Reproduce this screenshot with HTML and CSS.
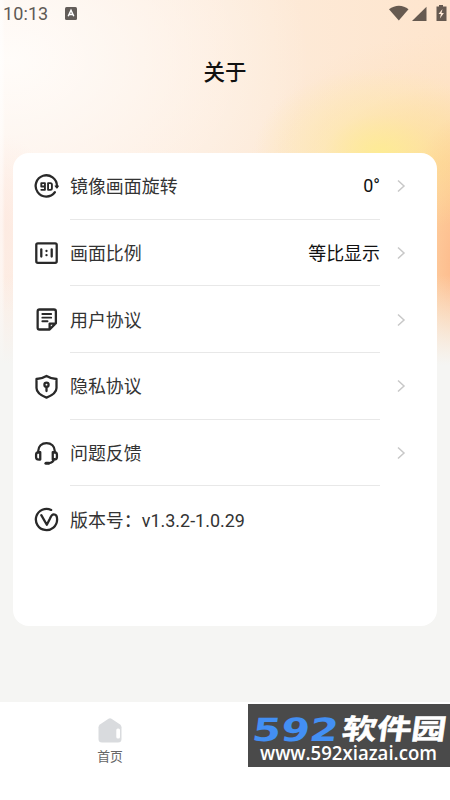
FILE: index.html
```html
<!DOCTYPE html>
<html lang="zh-CN">
<head>
<meta charset="utf-8">
<title>关于</title>
<link rel="stylesheet" href="styles.css">
</head>
<body>
<div class="screen">
  <header class="status">
    <span class="time">10:13</span>
    <svg class="badge" viewBox="0 0 12 13"><rect width="12" height="13" rx="1.5" fill="#625c58"/><path d="M3.2 9.2 6 3.3l2.8 5.9M4.2 7.5h3.6" fill="none" stroke="#fff" stroke-width="1.5"/></svg>
    <svg class="signals" viewBox="0 0 60 20"><g fill="#665a50"><path d="M0 4.300C6-.6 14-.6 19.500 4.300L9.800 15.500z"/><path d="M37.500 1.800V16H23z"/><path d="M50 1.500V0h4v1.500H57.500V16H47.500V1.500z"/></g><path d="M53.500 4l-4 5h2.400l-1 4.500 4-5.500h-2.400z" fill="#ffe9d5"/></svg>
  </header>
  <h1>关于</h1>
  <main class="card">
    <div class="row">
      <svg class="icon" viewBox="0 0 24 24"><path d="M20 17.500A10.200 10.200 0 1 1 22 11.500v1"/><path d="M20.300 11.500h3.200L22 13.500z" stroke-width="1"/><path class="fine" d="M10.500 12H7V8.800h3.500v6.400H7M13.500 8.800h2.200q1.500 0 1.500 1.500v3.400q0 1.500-1.500 1.500h-2.200z"/></svg>
      <div class="line"><span>镜像画面旋转</span><span class="value">0°</span></div>
      <svg class="chevron" viewBox="0 0 10 14"><path d="M2 1.500 8 7l-6 5.500"/></svg>
    </div>
    <div class="row">
      <svg class="icon" viewBox="0 0 24 24"><rect x="2.200" y="2.200" width="19.600" height="18.800" rx="1.500"/><path d="M7 8v7M17 8v7M12 9.500v.1M12 13.500v.1"/></svg>
      <div class="line"><span>画面比例</span><span class="value">等比显示</span></div>
      <svg class="chevron" viewBox="0 0 10 14"><path d="M2 1.500 8 7l-6 5.500"/></svg>
    </div>
    <div class="row">
      <svg class="icon" viewBox="0 0 24 24"><path d="M21 15.500V4.200q0-1.800-1.800-1.800H5.300q-1.800 0-1.800 1.800v15.600q0 1.800 1.800 1.800H15zM15 21v-5h5.500"/><path class="fine" d="M8 6.700h8.500M8 10.200h8.500M8 13.700h5"/></svg>
      <div class="line"><span>用户协议</span></div>
      <svg class="chevron" viewBox="0 0 10 14"><path d="M2 1.500 8 7l-6 5.500"/></svg>
    </div>
    <div class="row">
      <svg class="icon" viewBox="0 0 24 24"><path d="M12 1.900Q16.500 4.700 21.600 4.800V13.500Q21.600 19 12 22.700Q2.400 19 2.400 13.500V4.800Q7.500 4.700 12 1.900z"/><circle cx="12" cy="10.300" r="2"/><path d="M12 12.300v4"/></svg>
      <div class="line"><span>隐私协议</span></div>
      <svg class="chevron" viewBox="0 0 10 14"><path d="M2 1.500 8 7l-6 5.500"/></svg>
    </div>
    <div class="row">
      <svg class="icon" viewBox="0 0 24 24"><path d="M4 11V9.800C4 5 7.500 2 12 2s8 3 8 7.800V11M6 10.800v7H5Q2 17.800 2 15.500v-2.500q0-2.200 3-2.200zM18 10.800v7h1Q22 17.800 22 15.500v-2.500q0-2.200-3-2.200zM19.300 17.500Q18.500 20.700 14 21.200"/><path d="M11.500 21.400h2.500" stroke-width="3"/></svg>
      <div class="line"><span>问题反馈</span></div>
      <svg class="chevron" viewBox="0 0 10 14"><path d="M2 1.500 8 7l-6 5.500"/></svg>
    </div>
    <div class="row">
      <svg class="icon" viewBox="0 0 24 24"><path d="M16.500 2.800A10.200 10.200 0 1 0 22.200 12C22.200 8.500 21 7 19 7C17 7 16.400 8.400 15.400 11L12.300 17L7 7.800"/></svg>
      <div class="line last"><span>版本号：v1.3.2-1.0.29</span></div>
    </div>
  </main>
  <nav class="tabs">
    <div class="tab">
      <svg class="home" viewBox="0 0 24 25"><path d="M10.500.8q1.500-1 3 0l8.600 5.800q1.400 1 1.400 2.600V21q0 3.500-3.500 3.500H4Q.5 24.500.5 21V9.200q0-1.600 1.400-2.600z" fill="#d9dbde"/><rect x="18.300" y="10.500" width="3.700" height="10" rx="1.600" fill="#fff"/></svg>
      <span>首页</span>
    </div>
    <svg class="watermark" viewBox="0 0 202 63">
      <rect width="202" height="63" fill="#4a4a4a"/>
      <text class="digits" transform="translate(3 36.500) skewX(-8)" textLength="86" lengthAdjust="spacingAndGlyphs">592</text>
      <text class="brand" transform="translate(93 34.500) skewX(-8)" textLength="104" lengthAdjust="spacingAndGlyphs">软件园</text>
      <text class="site" x="12" y="56" textLength="177" lengthAdjust="spacingAndGlyphs">www.592xiazai.com</text>
    </svg>
  </nav>
</div>
</body>
</html>
```
FILE: styles.css
```css
* { box-sizing: border-box; }
body { margin: 0; font-family: Roboto, "Noto Sans CJK SC", sans-serif; }
.screen {
  width: 450px;
  height: 800px;
  overflow: hidden;
  display: flex;
  flex-direction: column;
  background:
    linear-gradient(180deg, rgba(245,245,243,0) 275px, #f5f5f3 365px),
    linear-gradient(90deg, rgba(255,255,255,.5) 2px, rgba(255,255,255,0) 5px),
    radial-gradient(ellipse 125px 85px at 380px 153px, rgba(253,237,145,.9), rgba(254,234,155,.4) 45%, rgba(254,232,170,0)),
    radial-gradient(ellipse 65px 150px at 462px 265px, rgba(253,182,135,1), rgba(253,190,135,.7) 45%, rgba(253,210,160,0)),
    radial-gradient(ellipse 190px 130px at 440px 165px, rgba(253,208,145,.8), rgba(253,222,180,.3) 60%, rgba(253,225,185,0)),
    radial-gradient(ellipse 60px 90px at 0 225px, rgba(253,232,223,.8), rgba(253,232,222,0)),
    radial-gradient(ellipse 300px 220px at 10px 60px, #fffcf9, rgba(255,250,246,0)),
    linear-gradient(90deg, #fdeee5, #fdead8 60%, #fee5cd);
}
.status { height: 28px; display: flex; align-items: center; padding-left: 3px; }
.time { width: 46px; font-size: 18px; line-height: 20px; color: #5e5955; letter-spacing: .1px; }
.badge { width: 12px; height: 13px; margin-left: 16px; margin-top: -1px; }
.signals { width: 60px; height: 20px; margin-left: auto; margin-right: 1px; margin-top: 2px; }
h1 { margin: 31px 0 0; height: 28px; font-size: 21.500px; line-height: 28px; font-weight: 500; text-align: center; color: #111; }
.card { height: 473px; margin: 66px 13px 0; border-radius: 16px; background: #fff; }
.row { height: 66.700px; display: flex; align-items: center; padding: 0 31px 0 21px; }
.icon { width: 25px; height: 25px; flex: none; fill: none; stroke: #292929; stroke-width: 2.200; stroke-linecap: round; stroke-linejoin: round; }
.icon .fine { stroke-width: 1.800; }
.line { width: 310px; height: 100%; margin-left: 11px; padding-bottom: 1px; display: flex; align-items: center; justify-content: space-between; border-bottom: 1.500px solid #e8e8e8; font-size: 17.950px; color: #333; }
.last { border: 0; padding-bottom: 2px; }
.value { color: #111; }
.chevron { width: 10px; height: 14px; margin-left: auto; fill: none; stroke: #c8c8c8; stroke-width: 1.500; }
.tabs { height: 98px; margin-top: auto; display: flex; align-items: flex-start; justify-content: space-between; background: #fff; }
.tab { width: 220px; padding-top: 16px; display: flex; flex-direction: column; align-items: center; gap: 5px; font-size: 12.800px; line-height: 18px; color: #666; }
.home { width: 24px; height: 25px; }
.watermark { width: 202px; height: 63px; margin-top: 2px; }
.digits { font: 700 32px "DejaVu Sans", sans-serif; fill: #438ff3; }
.brand { font: 700 28px "Noto Sans CJK SC", sans-serif; fill: #fff; stroke: #fff; stroke-width: .5; }
.site { font: 600 19px "Open Sans", "Noto Sans", sans-serif; fill: #fff; }
```
